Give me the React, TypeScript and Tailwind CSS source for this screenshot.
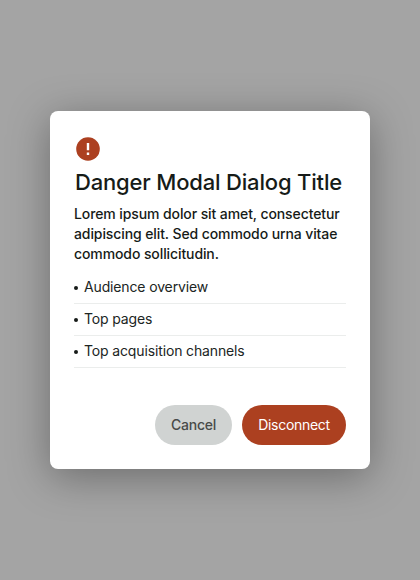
const items = ['Audience overview', 'Top pages', 'Top acquisition channels'];

export default function App() {
  return (
    <div className="flex h-[580px] w-[420px] items-center justify-center overflow-hidden bg-[#a4a4a4] font-[Inter,sans-serif] text-[#161b18]">
      <div className="h-[358px] w-[320px] rounded-lg bg-white px-6 pt-[26px] shadow-[0_8px_42px_rgba(0,0,0,0.34)]">
        <svg className="ml-[2px] block h-6 w-6" viewBox="0 0 24 24">
          <circle cx="12" cy="12" r="11.8" fill="#ac4020" />
          <path d="M10.8 6h2.4v7.2h-2.4zM10.8 15.6h2.4v2.4h-2.4z" fill="#fff" />
        </svg>
        <h1 className="mt-[7px] pl-px text-[22px] leading-7 font-[450] tracking-[-0.18px] whitespace-nowrap">Danger Modal Dialog Title</h1>
        <p className="mt-2 text-sm leading-5 font-medium tracking-[-0.1px] whitespace-nowrap">
          Lorem ipsum dolor sit amet, consectetur<br />adipiscing elit. Sed commodo urna vitae<br />commodo sollicitudin.
        </p>
        <ul className="mt-2">
          {items.map((t) => (
            <li key={t} className="flex h-8 items-center border-b border-[#ebedec] pb-px text-sm tracking-[-0.14px] text-[#202523]">
              <span className="mt-[2px] mr-[6px] h-1 w-1 rounded-full bg-[#161b18]" />
              {t}
            </li>
          ))}
        </ul>
        <div className="mt-[37px] flex justify-end gap-[10px] text-sm">
          <button className="h-10 w-[77px] rounded-full bg-[#d0d3d2] font-medium tracking-[-0.25px] text-[#484a49]">Cancel</button>
          <button className="h-10 w-[104px] rounded-full bg-[#ac4020] font-normal tracking-[-0.3px] text-white">Disconnect</button>
        </div>
      </div>
    </div>
  );
}
